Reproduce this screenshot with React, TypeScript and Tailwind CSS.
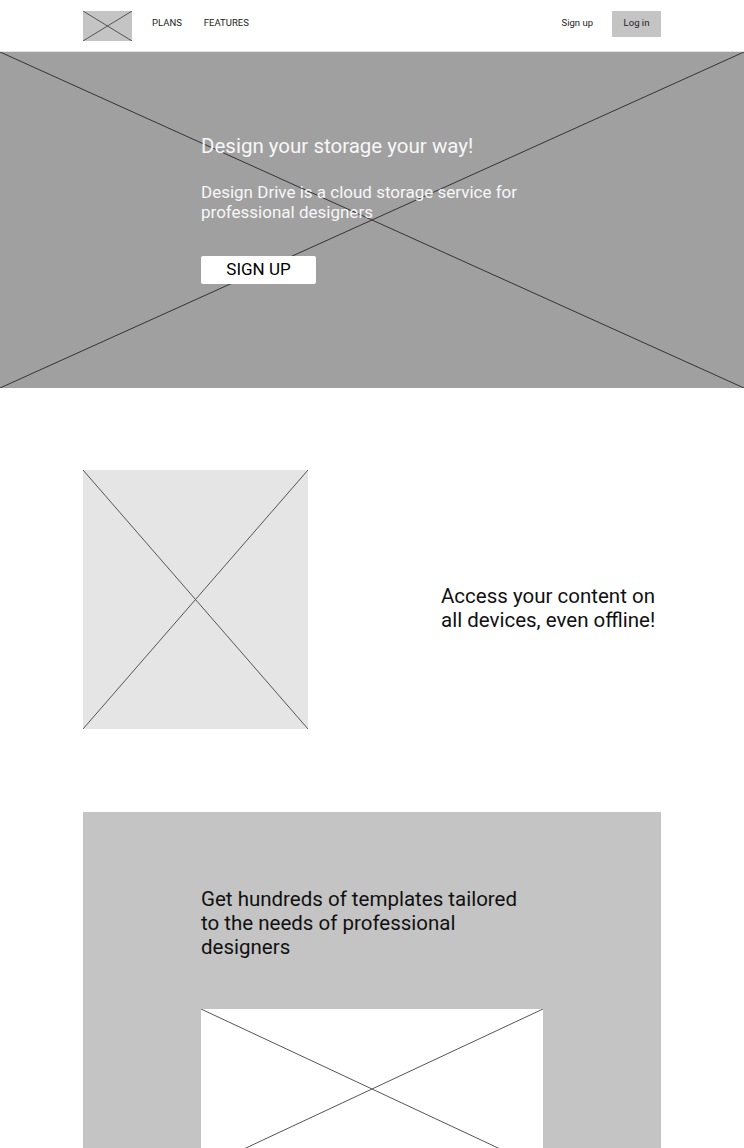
import type { ReactNode } from "react";

function Cross({ stroke = "#555" }: { stroke?: string }) {
  return (
    <svg
      className="absolute inset-0 h-full w-full"
      viewBox="0 0 100 100"
      preserveAspectRatio="none"
    >
      <line x1="0" y1="0" x2="100" y2="100" stroke={stroke} strokeWidth="1" vectorEffect="non-scaling-stroke" />
      <line x1="100" y1="0" x2="0" y2="100" stroke={stroke} strokeWidth="1" vectorEffect="non-scaling-stroke" />
    </svg>
  );
}

function Placeholder({ className, stroke, children }: { className: string; stroke?: string; children?: ReactNode }) {
  return (
    <div className={`relative ${className}`}>
      <Cross stroke={stroke} />
      {children}
    </div>
  );
}

export default function App() {
  return (
    <div className="min-h-[1148px] bg-white font-['Roboto','Liberation_Sans',sans-serif] text-black">
      {/* ナビ */}
      <header className="border-b border-[#e4e4e4]">
        <div className="mx-auto flex h-[51px] w-[578px] items-start pt-[11px]">
          <Placeholder className="h-[30px] w-[49px] bg-[#c4c4c4]" stroke="#555" />
          <nav className="ml-[20px] mt-[5px] flex gap-[22px] text-[9.5px] leading-[13px] text-[#222]">
            <span>PLANS</span>
            <span>FEATURES</span>
          </nav>
          <div className="ml-auto flex items-start gap-[19px] text-[9.5px] leading-[13px] text-[#222]">
            <span className="mt-[5px]">Sign up</span>
            <span className="flex h-[26px] w-[49px] justify-center bg-[#c4c4c4] pt-[5px]">Log in</span>
          </div>
        </div>
      </header>

      {/* ヒーロー */}
      <section className="relative h-[336px] bg-[#a0a0a0]">
        <Cross stroke="#333" />
        <div className="relative mx-auto w-[578px] pl-[118px] pt-[82px]">
          <h1 className="text-[20.5px] leading-[24px] text-[#f7f7f7]">Design your storage your way!</h1>
          <p className="mt-[24px] w-[330px] text-[17px] leading-[20px] text-[#f7f7f7]">
            Design Drive is a cloud storage service for professional designers
          </p>
          <button className="mt-[34px] flex h-[28px] w-[115px] items-center justify-center rounded-[2px] bg-white text-[17px] text-black">
            SIGN UP
          </button>
        </div>
      </section>

      {/* 機能 */}
      <section className="mx-auto mt-[82px] flex w-[578px] items-center justify-between">
        <Placeholder className="h-[259px] w-[225px] bg-[#e5e5e5]" stroke="#555" />
        <p className="mt-[16px] w-[220px] text-[20.5px] leading-[24px] text-[#111]">
          Access your content on all devices, even offline!
        </p>
      </section>

      {/* テンプレート */}
      <section className="mx-auto mt-[83px] h-[336px] w-[578px] bg-[#c4c4c4] pl-[118px] pt-[75px]">
        <p className="w-[330px] text-[20.5px] leading-[24px] text-[#111]">
          Get hundreds of templates tailored to the needs of professional designers
        </p>
        <Placeholder className="mt-[50px] h-[160px] w-[342px] bg-white" stroke="#555" />
      </section>
    </div>
  );
}
